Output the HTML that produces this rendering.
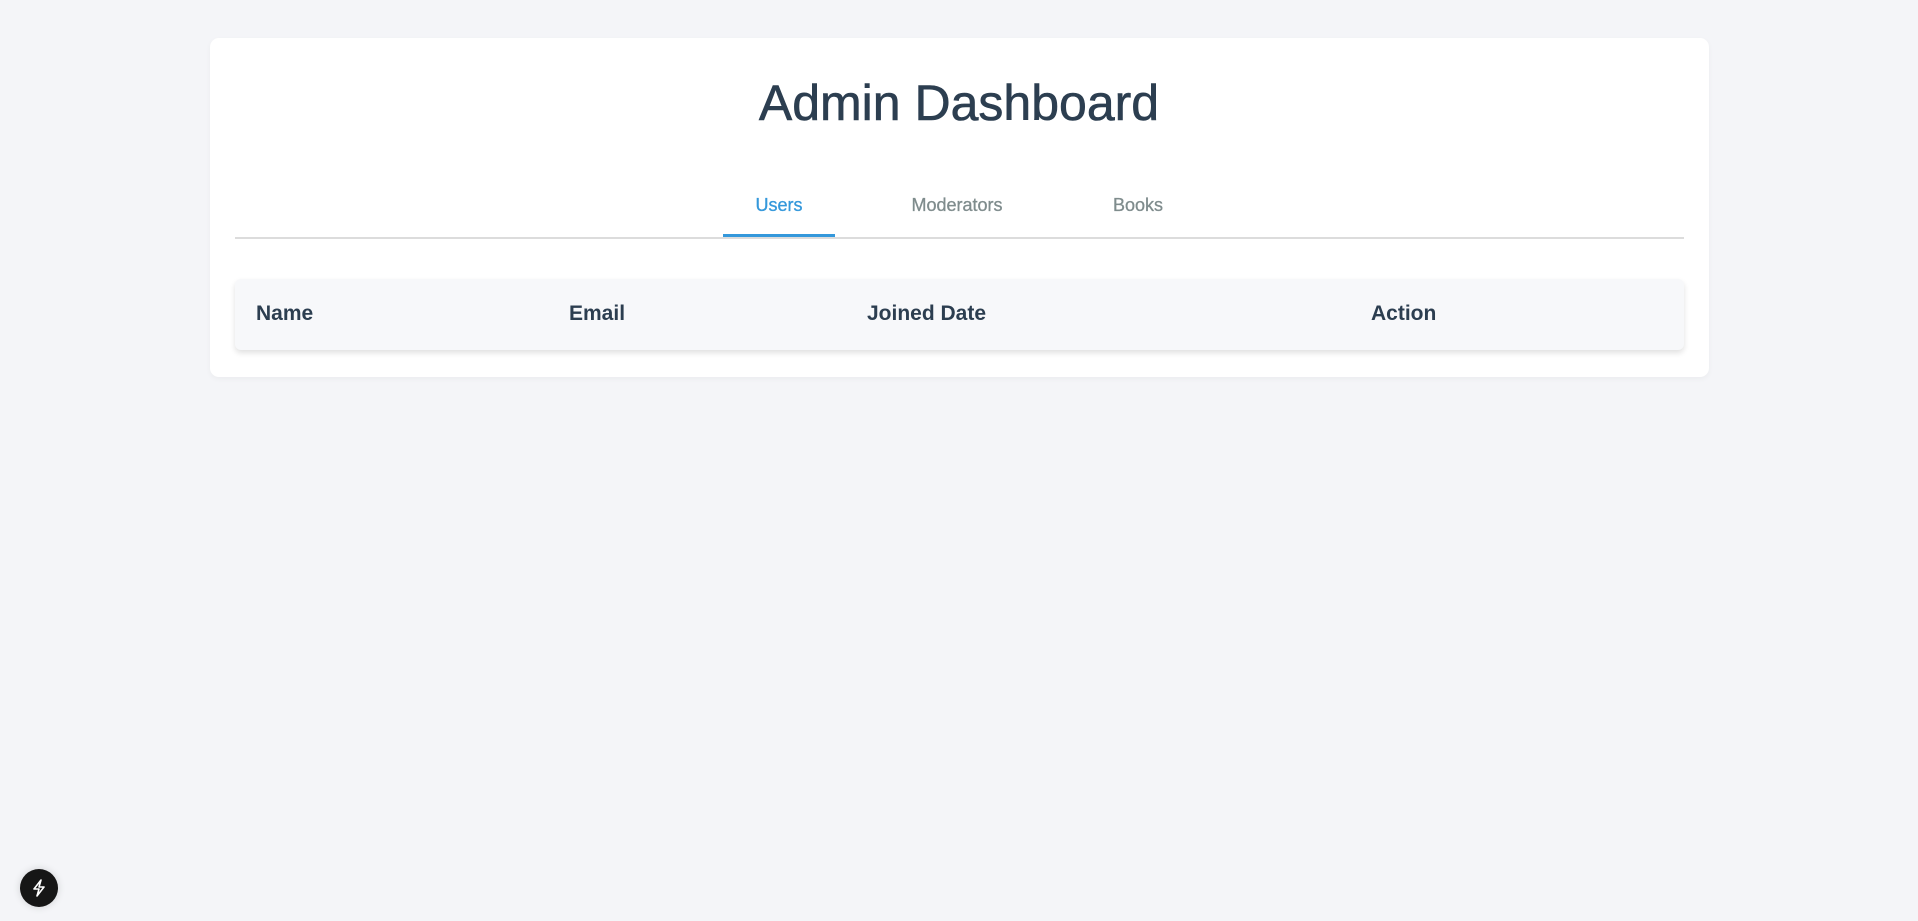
<!DOCTYPE html>
<html><head><style>
body{margin:0;background:#f4f5f8;font-family:"Liberation Sans",sans-serif;width:1918px;height:921px;position:relative;overflow:hidden}
.card{position:absolute;left:210px;top:38px;width:1499px;height:339px;background:#fff;border-radius:9px;box-shadow:0 2px 6px rgba(0,0,0,.04)}
h1{position:absolute;left:0;right:0;top:73px;margin:0;text-align:center;font-size:50px;font-weight:normal;color:#2c3e50;line-height:60px;-webkit-text-stroke:0.6px #2c3e50}
.t{position:absolute;top:193px;font-size:18px;line-height:24px;color:#7f8c8d;transform:translateX(-50%);-webkit-text-stroke:0.3px currentColor}
.line{position:absolute;left:235px;top:237px;width:1449px;height:2px;background:#dcdcdc}
.ul{position:absolute;left:723px;top:234px;width:112px;height:3px;background:#3498db}
.th{position:absolute;left:235px;top:279px;width:1449px;height:71px;background:#f7f8fa;border-radius:6px;box-shadow:0 3px 6px rgba(0,0,0,.12)}
.h{position:absolute;top:302px;font-size:21px;font-weight:bold;color:#2c3e50;line-height:24px}
.btn{position:absolute;left:20px;top:869px;width:38px;height:38px;border-radius:50%;background:#161616;box-shadow:0 0 8px rgba(0,0,0,.15)}
</style></head><body>
<div class="card"></div>
<h1>Admin Dashboard</h1>
<div class="t" style="left:779px;color:#3498db">Users</div>
<div class="t" style="left:957px">Moderators</div>
<div class="t" style="left:1138px">Books</div>
<div class="line"></div><div class="ul"></div>
<div class="th"></div>
<div class="h" style="left:256px">Name</div>
<div class="h" style="left:569px">Email</div>
<div class="h" style="left:867px">Joined Date</div>
<div class="h" style="left:1371px">Action</div>
<div class="btn"><svg width="38" height="38" viewBox="0 0 38 38"><path d="M21 11 L14 20 L19 20 L17 27 L24 18 L19 18 Z" fill="none" stroke="#fff" stroke-width="1.6" stroke-linejoin="round"/></svg></div>
</body></html>
